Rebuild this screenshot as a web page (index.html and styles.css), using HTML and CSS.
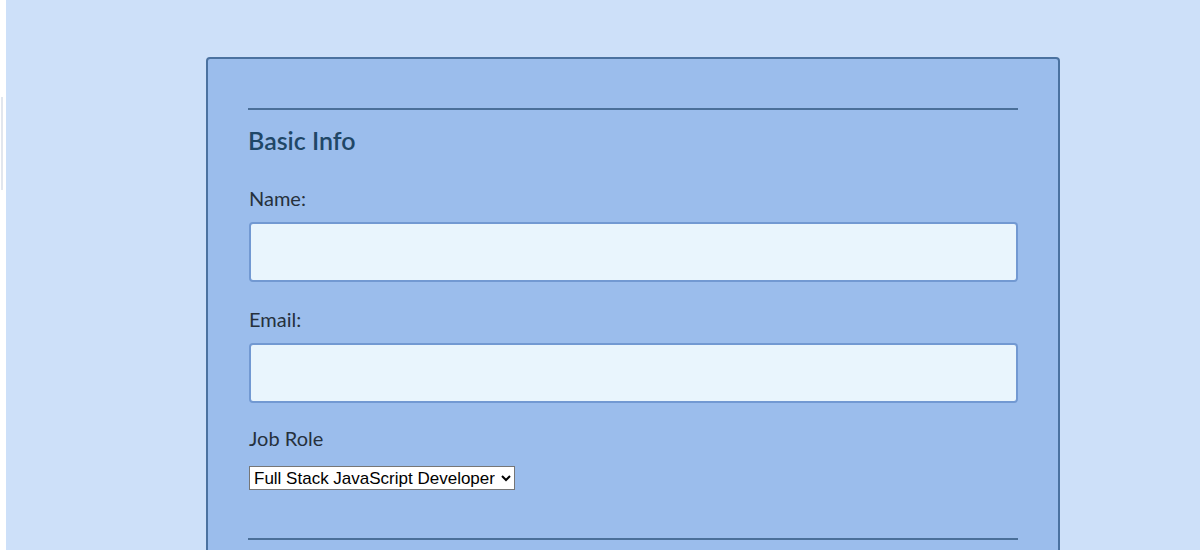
FILE: index.html
```html
<!DOCTYPE html>
<html lang="en">
<head>
<meta charset="utf-8">
<title>Registration</title>
<link rel="stylesheet" href="styles.css">
</head>
<body>
<div class="page">
  <aside class="edge"><span class="edge-line"></span></aside>
  <main class="main">
    <form class="card">
      <fieldset class="section">
        <hr class="rule">
        <h2 class="section-title">Basic Info</h2>
        <label class="field-label label-first" for="name">Name:</label>
        <input class="text-input" id="name" type="text">
        <label class="field-label" for="mail">Email:</label>
        <input class="text-input" id="mail" type="email">
        <label class="field-label label-role" for="title">Job Role</label>
        <div class="select-row">
          <select class="role-select" id="title">
            <option>Full Stack JavaScript Developer</option>
            <option>Front End Developer</option>
            <option>Back End Developer</option>
          </select>
        </div>
      </fieldset>
      <hr class="rule rule-bottom">
    </form>
  </main>
</div>
</body>
</html>
```
FILE: styles.css
```css
html, body {
  margin: 0;
  padding: 0;
  height: 100%;
  overflow: hidden;
}
body {
  background: #cde0f9;
  font-family: Lato, "Noto Sans", sans-serif;
}
.page {
  display: flex;
  min-height: 100%;
}
.edge {
  width: 6px;
  flex: none;
  background: #ffffff;
  padding-top: 97px;
  box-sizing: border-box;
}
.edge-line {
  display: block;
  width: 2px;
  height: 93px;
  margin-left: 1px;
  background: #e1e6ee;
}
.main {
  flex: 1;
  padding-top: 57px;
  padding-left: 200px;
}
.card {
  width: 854px;
  box-sizing: border-box;
  background: #9bbdec;
  border: 2px solid #4b72a0;
  border-radius: 4px;
  padding: 49px 40px 40px;
  min-height: 600px;
}
.section {
  border: 0;
  margin: 0;
  padding: 0;
  display: flex;
  flex-direction: column;
}
.rule {
  border: 0;
  height: 2px;
  background: #4a6f99;
  margin: 0;
}
.section-title {
  margin: 14px 0 0;
  font-size: 25px;
  font-weight: 600;
  color: #1f4767;
  line-height: 32px;
}
.field-label {
  margin-top: 24px;
  font-size: 20px;
  color: #26313d;
  line-height: 26px;
  padding-left: 1px;
}
.label-first {
  margin-top: 29px;
}
.label-role {
  margin-top: 22px;
}
.text-input {
  margin-top: 11px;
  margin-left: 1px;
  height: 60px;
  box-sizing: border-box;
  background: #e9f5fd;
  border: 2px solid #7299d2;
  border-radius: 4px;
  font-size: 18px;
  padding: 0 10px;
}
.select-row {
  margin-top: 15px;
  padding-left: 1px;
  display: flex;
}
.role-select {
  font-family: "Liberation Sans", Arial, sans-serif;
  font-size: 17px;
  height: 24px;
  padding-right: 3px;
  color: #000;
  background: #fff;
  border: 1px solid #767676;
  border-radius: 0;
}
.rule-bottom {
  margin-top: 48px;
}
```
